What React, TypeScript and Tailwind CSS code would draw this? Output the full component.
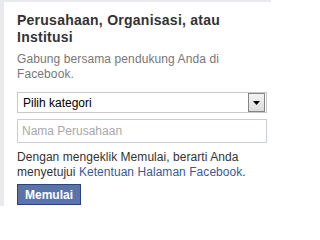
import React from "react";

export default function App() {
  return (
    <div className="w-[271px] h-[206px] bg-[#e9eaed] pt-[2px] pl-[4px] overflow-hidden" style={{ fontFamily: '"Liberation Sans", Arial, sans-serif' }}>
      <div className="bg-white w-full h-full pl-[13px] pt-[10px]">
        <div className="w-[250px]">
          <h2 className="text-[14px] leading-[17px] font-bold text-[#333] tracking-[0.25px]">
            Perusahaan, Organisasi, atau Institusi
          </h2>
          <p className="mt-[6px] text-[12px] leading-[15px] text-[#777] tracking-[0.1px]">
            Gabung bersama pendukung Anda di Facebook.
          </p>
          <div className="mt-[10px] h-[21px] border border-[#c8c8c8] flex items-center justify-between pl-[5px] pr-[1px]">
            <span className="text-[12px] text-black">Pilih kategori</span>
            <div className="w-[17px] h-[19px] border border-[#858585] bg-gradient-to-b from-[#f4f4f4] to-[#dcdcdc] flex items-center justify-center">
              <svg width="7" height="4" viewBox="0 0 7 4">
                <path d="M0 0H7L3.5 4Z" fill="#000" />
              </svg>
            </div>
          </div>
          <div className="mt-[6px] h-[24px] border border-[#c8cdd6] flex items-center pl-[4px]">
            <span className="text-[12px] text-[#a9a9a9]">Nama Perusahaan</span>
          </div>
          <p className="mt-[7px] text-[12px] leading-[15px] text-[#333] tracking-[0.05px]">
            Dengan mengeklik Memulai, berarti Anda menyetujui{" "}
            <span className="text-[#3b5998]">Ketentuan Halaman Facebook</span>.
          </p>
          <div className="mt-[4px] inline-flex h-[21px] items-center px-[7px] bg-[#5b74a8] border border-[#29447e] text-white text-[12px] font-bold">
            Memulai
          </div>
        </div>
      </div>
    </div>
  );
}
